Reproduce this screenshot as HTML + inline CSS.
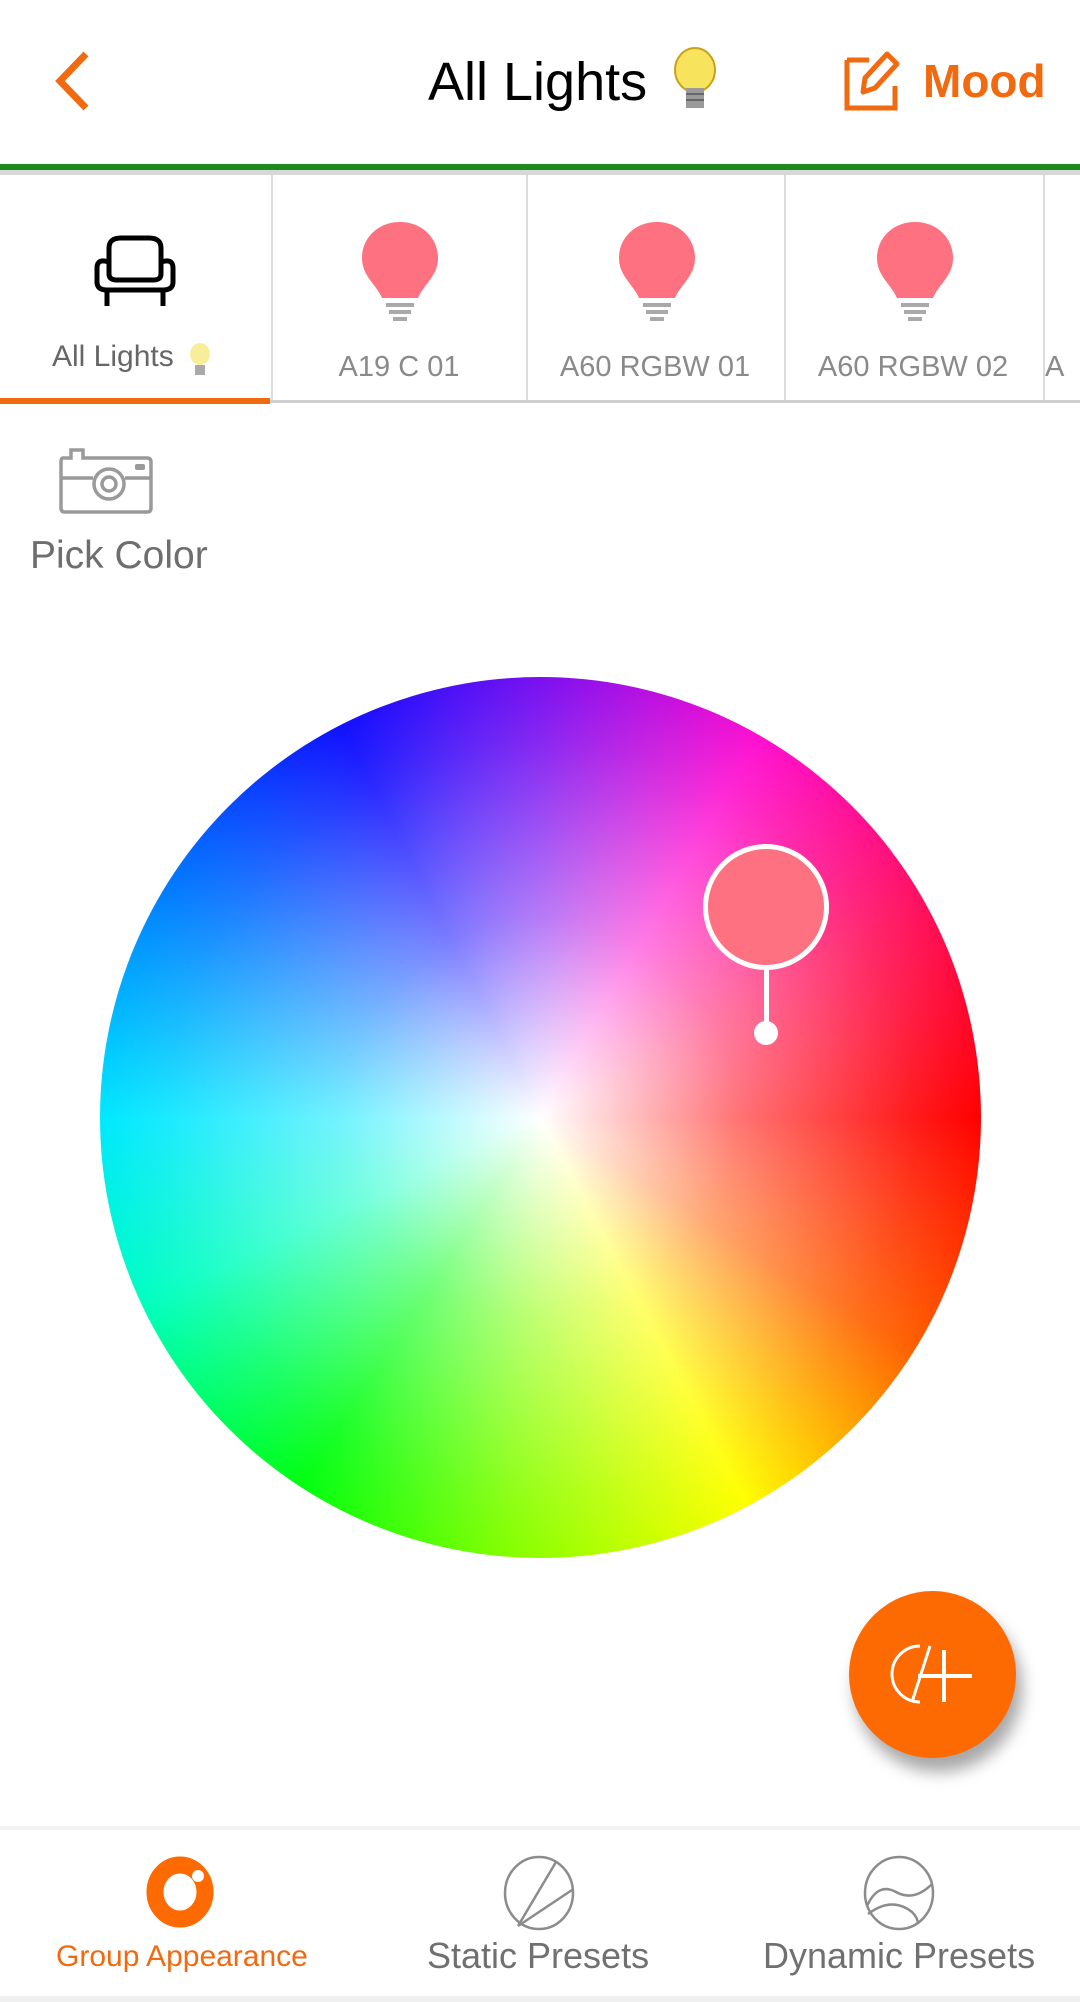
<!DOCTYPE html>
<html><head><meta charset="utf-8"><style>
*{margin:0;padding:0;box-sizing:border-box}
body{width:1080px;height:2002px;background:#fff;position:relative;overflow:hidden;font-family:"Liberation Sans",sans-serif}
.abs{position:absolute}
.lbl{position:absolute;top:351px;width:256px;text-align:center;font-size:29px;color:#8a8a8a}
.div{position:absolute;top:175px;width:2px;height:228px;background:#dcdcdc}
</style></head><body>
<!-- header -->
<svg class="abs" style="left:48px;top:48px" width="50" height="66"><path d="M38 6 L12 33 L38 60" fill="none" stroke="#f26a10" stroke-width="7"/></svg>
<div class="abs" style="left:428px;top:51px;font-size:54px;color:#000">All Lights</div>
<svg class="abs" style="left:670px;top:44px" width="54" height="72"><ellipse cx="25" cy="26" rx="20" ry="22" fill="#f7e45c" stroke="#c9a21a" stroke-width="2"/><rect x="16" y="44" width="18" height="20" fill="#9a9a9a"/><path d="M16 50h18M16 56h18" stroke="#666" stroke-width="2"/></svg>
<svg class="abs" style="left:843px;top:46px" width="62" height="66"><path d="M4 14 H26 M4 14 V62 H52 V40" fill="none" stroke="#f26a10" stroke-width="5"/><path d="M20 46 L22 32 L44 8 L54 18 L32 42 Z" fill="none" stroke="#f26a10" stroke-width="5" stroke-linejoin="round"/></svg>
<div class="abs" style="left:923px;top:54px;font-size:46px;color:#f26a10;font-weight:bold">Mood</div>
<div class="abs" style="left:0;top:164px;width:1080px;height:6px;background:#1e8a1e"></div>
<div class="abs" style="left:0;top:170px;width:1080px;height:5px;background:#d8d8d8"></div>
<!-- tabs -->
<div class="div" style="left:271px"></div><div class="div" style="left:526px"></div><div class="div" style="left:784px"></div><div class="div" style="left:1043px"></div>
<div class="abs" style="left:0;top:400px;width:1080px;height:3px;background:#cfcfcf"></div>
<div class="abs" style="left:0;top:398px;width:270px;height:6px;background:#f26a10"></div>
<svg class="abs" style="left:93px;top:234px" width="84" height="74"><path d="M16 28 V14 Q16 4 28 4 H56 Q68 4 68 14 V28" fill="none" stroke="#000" stroke-width="5"/><path d="M16 28 Q4 24 4 34 V48 Q4 56 14 56 H70 Q80 56 80 48 V34 Q80 24 68 28 V40 Q68 46 60 46 H24 Q16 46 16 40 Z" fill="none" stroke="#000" stroke-width="5" stroke-linejoin="round"/><path d="M14 56V72M70 56V72" stroke="#000" stroke-width="5"/></svg>
<div class="abs" style="left:52px;top:340px;font-size:30px;color:#666">All Lights</div>
<svg class="abs" style="left:188px;top:342px" width="24" height="36"><ellipse cx="12" cy="12" rx="10" ry="11" fill="#f8ee9a"/><rect x="7" y="23" width="10" height="10" fill="#aaa"/></svg>
<svg class="abs" style="left:360px;top:220px" width="80" height="108"><g id="b"><path d="M40 2 C18 2 2 18 2 38 C2 56 16 64 22 78 H58 C64 64 78 56 78 38 C78 18 62 2 40 2Z" fill="#fd7180"/><path d="M26 85H54M29 92H51M33 99H47" stroke="#a9a9a9" stroke-width="4"/></g></svg>
<svg class="abs" style="left:617px;top:220px" width="80" height="108"><use href="#b"/></svg>
<svg class="abs" style="left:875px;top:220px" width="80" height="108"><use href="#b"/></svg>
<div class="lbl" style="left:271px">A19 C 01</div>
<div class="lbl" style="left:527px">A60 RGBW 01</div>
<div class="lbl" style="left:785px">A60 RGBW 02</div>
<div class="lbl" style="left:1045px;width:60px;text-align:left">A</div>
<!-- pick color -->
<svg class="abs" style="left:57px;top:444px" width="98" height="72"><path d="M6 14 H14 V6 H26 V14 H90 Q94 14 94 18 V64 Q94 68 90 68 H8 Q4 68 4 64 V18 Q4 14 6 14Z" fill="none" stroke="#9a9a9a" stroke-width="3.5"/><path d="M4 34H36M68 34H94" stroke="#9a9a9a" stroke-width="3.5"/><circle cx="52" cy="40" r="15" fill="none" stroke="#9a9a9a" stroke-width="3.5"/><circle cx="52" cy="40" r="7" fill="none" stroke="#9a9a9a" stroke-width="3.5"/><rect x="78" y="20" width="10" height="6" rx="2" fill="#9a9a9a"/></svg>
<div class="abs" style="left:30px;top:534px;font-size:39px;color:#6e6e6e">Pick Color</div>
<!-- wheel -->
<div class="abs" style="left:100px;top:677px;width:881px;height:881px;border-radius:50%;background:conic-gradient(from 0deg,#7a10f0 0deg,#ff10d0 30deg,#ff1060 60deg,#ff0000 90deg,#ff6000 122deg,#ffff00 152deg,#80ff00 185deg,#00ff10 213deg,#00ffc0 245deg,#00e8ff 270deg,#0080ff 300deg,#1010ff 333deg,#7a10f0 360deg)"></div>
<div class="abs" style="left:100px;top:677px;width:881px;height:881px;border-radius:50%;background:radial-gradient(closest-side,rgba(255,255,255,1) 0%,rgba(255,255,255,.85) 12%,rgba(255,255,255,.45) 45%,rgba(255,255,255,.1) 85%,rgba(255,255,255,0) 100%)"></div>
<div class="abs" style="left:764px;top:960px;width:5px;height:72px;background:#fff"></div>
<div class="abs" style="left:754px;top:1021px;width:24px;height:24px;border-radius:50%;background:#fff"></div>
<div class="abs" style="left:703px;top:844px;width:126px;height:126px;border-radius:50%;background:#fd7180;border:5px solid #fff"></div>
<!-- fab -->
<div class="abs" style="left:849px;top:1591px;width:167px;height:167px;border-radius:50%;background:#fd6a02;box-shadow:6px 14px 16px rgba(0,0,0,.35)"></div>
<svg class="abs" style="left:890px;top:1640px" width="84" height="70"><path d="M30 6 A28 28 0 1 0 30 62" fill="none" stroke="#fff" stroke-width="3"/><path d="M40 6 L22 62" stroke="#fff" stroke-width="3"/><path d="M28 36H82M54 10V62" stroke="#fff" stroke-width="4"/></svg>
<!-- bottom nav -->
<div class="abs" style="left:0;top:1826px;width:1080px;height:4px;background:#f3f3f3"></div>
<div class="abs" style="left:0;top:1996px;width:1080px;height:6px;background:#f0f0f0"></div>
<svg class="abs" style="left:141px;top:1852px" width="78" height="80"><ellipse cx="39" cy="40" rx="25" ry="27" fill="none" stroke="#fd6a02" stroke-width="17"/><circle cx="57" cy="24" r="6" fill="#fff"/></svg>
<svg class="abs" style="left:502px;top:1854px" width="74" height="78"><ellipse cx="37" cy="39" rx="34" ry="36" fill="none" stroke="#8c8c8c" stroke-width="2.5"/><path d="M54 8 L16 72 M16 72 L70 36" fill="none" stroke="#8c8c8c" stroke-width="2.5"/></svg>
<svg class="abs" style="left:862px;top:1854px" width="74" height="78"><ellipse cx="37" cy="39" rx="34" ry="36" fill="none" stroke="#8c8c8c" stroke-width="2.5"/><path d="M5 52 Q16 28 34 38 Q52 48 70 30 M6 60 Q30 42 50 58 Q56 64 56 70" fill="none" stroke="#8c8c8c" stroke-width="2.5"/></svg>
<div class="abs" style="left:56px;top:1940px;font-size:30px;color:#f26a10">Group Appearance</div>
<div class="abs" style="left:427px;top:1935px;font-size:36px;color:#707070">Static Presets</div>
<div class="abs" style="left:763px;top:1935px;font-size:36px;color:#707070">Dynamic Presets</div>
</body></html>
